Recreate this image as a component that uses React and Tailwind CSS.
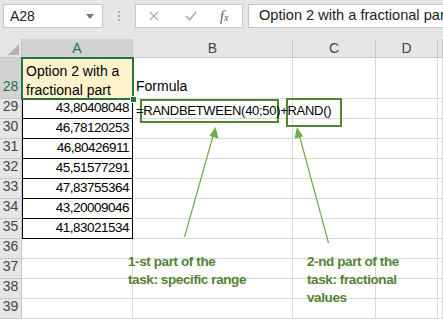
import React from "react";

const values = [
  "43,80408048",
  "46,78120253",
  "46,80426911",
  "45,51577291",
  "47,83755364",
  "43,20009046",
  "41,83021534",
];

const cols = ["A", "B", "C", "D", ""];

const RowHead = ({ n, active }) => (
  <div
    className={`border-r border-b border-[#c8c8c8] flex items-end justify-center pb-[1px] text-[14px] ${
      active ? "bg-[#d2d2d2] text-[#217346]" : "bg-[#e6e6e6] text-[#444]"
    }`}
  >
    {n}
  </div>
);

const Cell = ({ children, className = "" }) => (
  <div className={`border-r border-b border-[#d9d9d9] whitespace-nowrap overflow-visible ${className}`}>
    {children}
  </div>
);

export default function App() {
  return (
    <div className="relative w-[443px] h-[323px] overflow-hidden bg-white font-['Liberation_Sans',Arial,sans-serif] text-[13px] text-black">
      {/* formula bar */}
      <div className="h-[39px] bg-[#e6e6e6] flex items-start pt-[4px]">
        <div className="ml-[3px] w-[100px] h-[24px] bg-white border border-[#c6c6c6] flex items-center justify-between pl-[6px] pr-[8px]">
          <span className="text-[14px] text-[#222]">A28</span>
          <svg width="8" height="5" viewBox="0 0 8 5">
            <path d="M0 0h8L4 5z" fill="#777" />
          </svg>
        </div>
        <div className="w-[32px] h-[24px] flex flex-col items-center justify-center gap-[2px]">
          <span className="w-[2px] h-[2px] bg-[#a6a6a6]" />
          <span className="w-[2px] h-[2px] bg-[#a6a6a6]" />
          <span className="w-[2px] h-[2px] bg-[#a6a6a6]" />
        </div>
        <div className="w-[108px] h-[24px] bg-white border border-[#c6c6c6] flex items-center">
          <svg className="ml-[13px]" width="10" height="10" viewBox="0 0 10 10">
            <path d="M1 1l8 8M9 1l-8 8" stroke="#a6a6a6" strokeWidth="1.2" />
          </svg>
          <svg className="ml-[26px]" width="12" height="10" viewBox="0 0 12 10">
            <path d="M1 5l3.5 4L11 1" stroke="#a6a6a6" strokeWidth="1.4" fill="none" />
          </svg>
          <span className="ml-[23px] font-['Liberation_Serif',serif] italic text-[14px] text-[#555]">
            f<span className="text-[10px]">x</span>
          </span>
        </div>
        <div className="ml-[5px] flex-1 h-[24px] bg-white border border-[#c6c6c6] border-r-0 flex items-center pl-[10px] whitespace-nowrap overflow-hidden">
          <span className="text-[14.6px] text-[#222]">Option 2 with a fractional part</span>
        </div>
      </div>

      {/* sheet */}
      <div className="grid grid-cols-[22px_111px_160px_83px_62px_5px] grid-rows-[19px_41px_repeat(12,20px)]">
        <div className="bg-[#e6e6e6] border-r border-b border-[#c8c8c8] relative">
          <svg className="absolute right-[2px] bottom-[2px]" width="11" height="11" viewBox="0 0 11 11">
            <path d="M11 0v11H0z" fill="#b4b4b4" />
          </svg>
        </div>
        {cols.map((c, i) => (
          <div
            key={i}
            className={`border-r border-b border-[#c8c8c8] flex items-center justify-center text-[14px] ${
              c === "A" ? "bg-[#d2d2d2] text-[#217346]" : "bg-[#e6e6e6] text-[#444]"
            }`}
          >
            {c}
          </div>
        ))}

        {/* row 28 */}
        <RowHead n={28} active />
        <Cell className="bg-[#fff2cc] pl-[4px] pt-[4px] text-[14px] leading-[19px] whitespace-normal">
          Option 2 with a
          <br />
          fractional part
        </Cell>
        <Cell className="flex items-end pl-[3px] pb-[1px] text-[14px]">Formula</Cell>
        <Cell />
        <Cell />
        <Cell />

        {/* rows 29-39 */}
        {Array.from({ length: 11 }).map((_, r) => {
          const n = 29 + r;
          const v = values[r];
          return (
            <React.Fragment key={n}>
              <RowHead n={n} />
              {v ? (
                <div className="border-l border-r border-b border-black flex items-center justify-end pr-[3px] text-[13.5px] tracking-[-0.5px]">
                  {v}
                </div>
              ) : (
                <Cell />
              )}
              <Cell className="relative">
                {n === 29 && (
                  <span className="absolute left-[3px] top-[2px] tracking-[-0.3px] z-10">
                    =RANDBETWEEN(40;50)+RAND()
                  </span>
                )}
              </Cell>
              <Cell />
              <Cell />
              <Cell />
            </React.Fragment>
          );
        })}
      </div>

      {/* selection of A28 */}
      <div className="absolute left-[21px] top-[57px] w-[113px] h-[43px] border-2 border-[#217346]" />
      <div className="absolute left-[130px] top-[96px] w-[7px] h-[7px] bg-[#217346] border border-white" />

      {/* annotation boxes */}
      <div className="absolute left-[140px] top-[99px] w-[139px] h-[24px] border-2 border-[#548235]" />
      <div className="absolute left-[286px] top-[98px] w-[56px] h-[29px] border-2 border-[#548235]" />

      {/* arrows */}
      <svg className="absolute left-0 top-0 pointer-events-none" width="443" height="323" viewBox="0 0 443 323">
        <line x1="184.5" y1="237" x2="213" y2="136" stroke="#70ad47" strokeWidth="1.2" />
        <path d="M215.5 127 L218.5 138.5 L209.5 136 Z" fill="#70ad47" />
        <line x1="328.5" y1="243" x2="299.5" y2="136" stroke="#70ad47" strokeWidth="1.2" />
        <path d="M297 127 L303 136.5 L294.5 138.5 Z" fill="#70ad47" />
      </svg>

      {/* annotation texts */}
      <div className="absolute left-[128px] top-[253px] font-bold text-[13.5px] text-[#548235] leading-[18px] tracking-[-0.4px]">
        1-st part of the
        <br />
        task: specific range
      </div>
      <div className="absolute left-[307px] top-[253px] font-bold text-[13.5px] text-[#548235] leading-[18px] tracking-[-0.4px]">
        2-nd part of the
        <br />
        task: fractional
        <br />
        values
      </div>
    </div>
  );
}
